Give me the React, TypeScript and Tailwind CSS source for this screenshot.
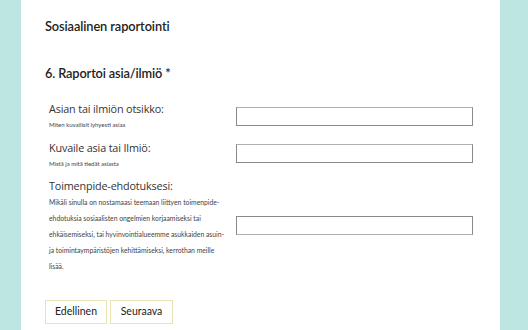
import React from "react";

const lato = { fontFamily: "Lato, 'Open Sans', sans-serif" };
const label = { fontFamily: "'Open Sans', 'Noto Sans', sans-serif" };

export default function App() {
  return (
    <div className="w-[528px] h-[330px] bg-[#bde5e1] overflow-hidden">
      <div className="ml-[21px] w-[479px] h-[330px] bg-white pl-[24px] text-[#222]">
        <div style={lato} className="pt-[17px] text-[12.8px] font-semibold leading-[18px] tracking-[-0.1px]">
          Sosiaalinen raportointi
        </div>
        <div style={lato} className="mt-[28px] text-[12.8px] font-semibold leading-[20px] tracking-[-0.15px]">
          6. Raportoi asia/ilmiö *
        </div>
        <div className="mt-[17px] pl-[4px] flex flex-col">
          <div className="flex">
            <div className="w-[187px]">
              <div style={label} className="text-[10.8px] leading-[17px] text-[#333] tracking-[-0.15px]">Asian tai ilmiön otsikko:</div>
              <div style={lato} className="mt-[3px] text-[6px] leading-[9px] text-[#444]">Miten kuvailisit lyhyesti asiaa</div>
            </div>
            <div className="mt-[7px] w-[237px] h-[19px] border border-[#8a8a8a] border-t-[#b0b0b0]" />
          </div>
          <div className="flex mt-[10px]">
            <div className="w-[187px]">
              <div style={label} className="text-[10.8px] leading-[17px] text-[#333] tracking-[-0.15px]">Kuvaile asia tai Ilmiö:</div>
              <div style={lato} className="mt-[3px] text-[6px] leading-[9px] text-[#444]">Mistä ja mitä tiedät asiasta</div>
            </div>
            <div className="mt-[5px] w-[237px] h-[19px] border border-[#8a8a8a] border-t-[#b0b0b0]" />
          </div>
          <div className="flex mt-[9px]">
            <div className="w-[187px]">
              <div style={label} className="text-[10.8px] leading-[17px] text-[#333] tracking-[-0.15px]">Toimenpide-ehdotuksesi:</div>
              <div style={lato} className="mt-[0px] w-[185px] text-[6.8px] leading-[16px] text-[#444]">
                Mikäli sinulla on nostamaasi teemaan liittyen toimenpide-
                <br />
                ehdotuksia sosiaalisten ongelmien korjaamiseksi tai
                <br />
                ehkäisemiseksi, tai hyvinvointialueemme asukkaiden asuin-
                <br />
                ja toimintaympäristöjen kehittämiseksi, kerrothan meille
                <br />
                lisää.
              </div>
            </div>
            <div className="mt-[39px] w-[237px] h-[19px] border border-[#8a8a8a] border-b-[#b0b0b0]" />
          </div>
        </div>
        <div style={lato} className="mt-[26px] flex gap-[3px]">
          <button className="w-[62px] h-[24px] border border-[#e8e4b6] bg-white text-[10.5px] text-[#222]">Edellinen</button>
          <button className="w-[63px] h-[24px] border border-[#e8e4b6] bg-white text-[10.5px] text-[#222]">Seuraava</button>
        </div>
      </div>
    </div>
  );
}
